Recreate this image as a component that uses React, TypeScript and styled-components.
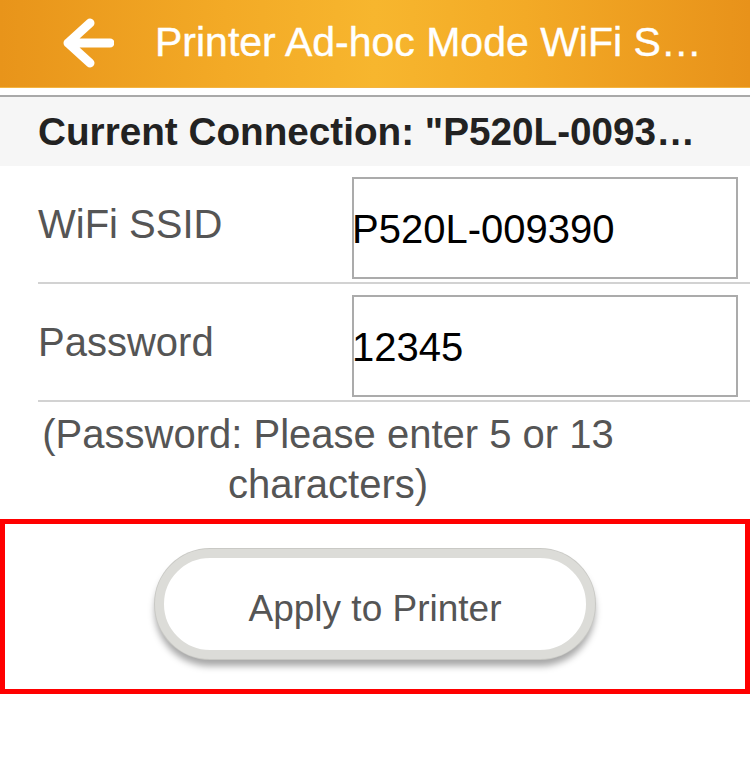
import styled, { createGlobalStyle } from 'styled-components';

const GlobalStyle = createGlobalStyle`
  body {
    margin: 0;
    background: #ffffff;
    font-family: "Liberation Sans", Arial, Helvetica, sans-serif;
  }
`;

const Page = styled.div`
  width: 750px;
  min-height: 778px;
  background: #ffffff;
`;

const Header = styled.header`
  height: 87px;
  display: flex;
  align-items: center;
  padding-left: 62px;
  gap: 41px;
  background: linear-gradient(to right, #e8941a 0%, #f3aa26 30%, #f7b62e 50%, #f3aa26 70%, #e8921a 100%);
  border-bottom: 1px solid #f4b440;
`;

const Title = styled.h1`
  margin: 0;
  font-size: 41px;
  font-weight: normal;
  color: #ffffff;
  white-space: nowrap;
  -webkit-text-stroke: 0.4px #ffffff;
  padding-bottom: 2px;
`;

const ConnectionBar = styled.div`
  margin-top: 7px;
  height: 69px;
  border-top: 2px solid #a9a9a9;
  background: #f6f6f6;
  display: flex;
  align-items: center;
  padding-left: 38px;
`;

const ConnectionText = styled.div`
  font-size: 38.7px;
  font-weight: bold;
  color: #222222;
  white-space: nowrap;
  padding-top: 1px;
`;

const Row = styled.div`
  margin-left: 38px;
  padding: 11px 12px 3px 0;
  display: grid;
  grid-template-columns: 314px 386px;
  border-bottom: 2px solid #d2d2d2;
`;

const Label = styled.div`
  align-self: center;
  font-size: 40px;
  color: #555555;
  padding-bottom: 7px;
`;

const Field = styled.div`
  box-sizing: border-box;
  height: 102px;
  border: 2px solid #ababab;
  display: flex;
  align-items: center;
  font-size: 40px;
  color: #000000;
  text-indent: -2px;
  padding-top: 3px;
`;

const Note = styled.p`
  margin: 7px 0 0 38px;
  width: 580px;
  font-size: 40px;
  line-height: 50px;
  color: #555555;
  text-align: center;
`;

const Highlight = styled.div`
  margin-top: 10px;
  box-sizing: border-box;
  height: 175px;
  border: 5px solid #ff0000;
  display: flex;
  justify-content: center;
  padding-top: 25px;
`;

const PillButton = styled.button`
  box-sizing: border-box;
  width: 440px;
  height: 110px;
  border-radius: 55px;
  border: 9px solid #dcdcd8;
  background: #ffffff;
  box-shadow: 0 0 0 1px #c9c9c5, 0 7px 7px rgba(0, 0, 0, 0.35);
  font-family: "Liberation Sans", Arial, Helvetica, sans-serif;
  font-size: 37px;
  color: #555555;
  padding: 10px 0 0;
`;

function BackArrow() {
  return (
    <svg width="52" height="52" viewBox="0 0 52 52" aria-hidden="true">
      <path
        d="M28 5 L6 25 L28 45 M6 25 L48 25"
        fill="none"
        stroke="#ffffff"
        strokeWidth="9"
        strokeLinecap="round"
        strokeLinejoin="round"
      />
    </svg>
  );
}

const fields = [
  { id: 'ssid', label: 'WiFi SSID', value: 'P520L-009390' },
  { id: 'password', label: 'Password', value: '12345' },
];

export default function App() {
  return (
    <Page>
      <GlobalStyle />
      <Header>
        <BackArrow />
        <Title>Printer Ad-hoc Mode WiFi S…</Title>
      </Header>
      <ConnectionBar>
        <ConnectionText>Current Connection: "P520L-0093…</ConnectionText>
      </ConnectionBar>
      {fields.map(field => (
        <Row key={field.id}>
          <Label>{field.label}</Label>
          <Field>{field.value}</Field>
        </Row>
      ))}
      <Note>(Password: Please enter 5 or 13 characters)</Note>
      <Highlight>
        <PillButton>Apply to Printer</PillButton>
      </Highlight>
    </Page>
  );
}
